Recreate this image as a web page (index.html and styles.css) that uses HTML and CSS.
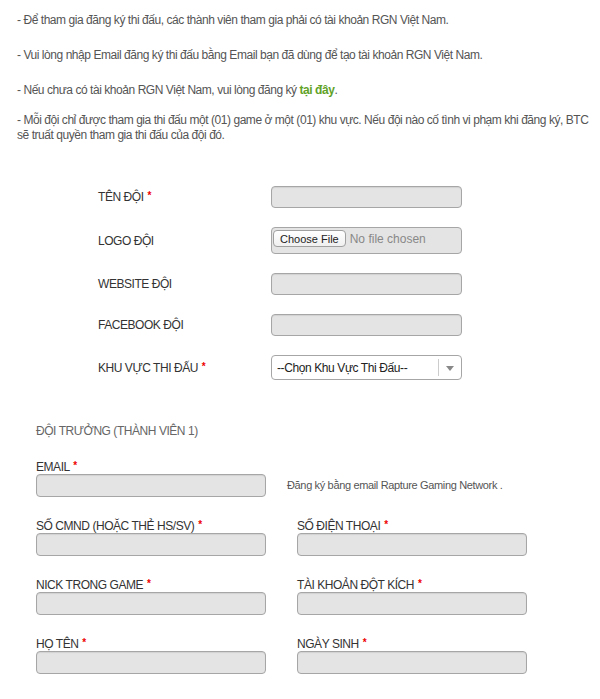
FILE: index.html
```html
<!DOCTYPE html>
<html lang="vi">
<head>
    <meta charset="UTF-8">
    <meta name="viewport" content="width=device-width, initial-scale=1.0">
    <title>Đăng ký thi đấu</title>
    <link rel="stylesheet" href="styles.css">
</head>
<body>
    <div class="register-page">

        <!-- Notes before the form -->
        <div class="notes">
            <p class="note">- Để tham gia đăng ký thi đấu, các thành viên tham gia phải có tài khoản RGN Việt Nam.</p>
            <p class="note">- Vui lòng nhập Email đăng ký thi đấu bằng Email bạn đã dùng để tạo tài khoản RGN Việt Nam.</p>
            <p class="note short">- Nếu chưa có tài khoản RGN Việt Nam, vui lòng đăng ký <a href="#" class="green-link">tại đây</a>.</p>
            <p class="note">- Mỗi đội chỉ được tham gia thi đấu một (01) game ở một (01) khu vực. Nếu đội nào cố tình vi phạm khi đăng ký, BTC sẽ truất quyền tham gia thi đấu của đội đó.</p>
        </div>

        <!-- Team info -->
        <div class="team-form">
            <label class="team-label" for="teamName">TÊN ĐỘI <span class="req">*</span></label>
            <input class="text-input" type="text" id="teamName">

            <label class="team-label" for="teamLogo">LOGO ĐỘI</label>
            <div class="file-box">
                <input type="file" id="teamLogo" class="file-input">
            </div>

            <label class="team-label" for="teamSite">WEBSITE ĐỘI</label>
            <input class="text-input" type="text" id="teamSite">

            <label class="team-label" for="teamFb">FACEBOOK ĐỘI</label>
            <input class="text-input" type="text" id="teamFb">

            <label class="team-label" for="teamRegion">KHU VỰC THI ĐẤU <span class="req">*</span></label>
            <div class="select-box">
                <select id="teamRegion" class="region-select">
                    <option>--Chọn Khu Vực Thi Đấu--</option>
                    <option>Hà Nội</option>
                    <option>TP. Hồ Chí Minh</option>
                </select>
                <span class="select-arrow"></span>
            </div>
        </div>

        <!-- Captain (member 1) -->
        <div class="member">
            <div class="member-title">ĐỘI TRƯỞNG (THÀNH VIÊN 1)</div>

            <div class="email-row">
                <div class="field">
                    <label class="field-label" for="m1Email">EMAIL <span class="req">*</span></label>
                    <input class="text-input wide" type="text" id="m1Email">
                </div>
                <div class="hint">Đăng ký bằng email Rapture Gaming Network .</div>
            </div>

            <div class="member-grid">
                <div class="field">
                    <label class="field-label" for="m1Id">SỐ CMND (HOẶC THẺ HS/SV) <span class="req">*</span></label>
                    <input class="text-input wide" type="text" id="m1Id">
                </div>
                <div class="field">
                    <label class="field-label" for="m1Phone">SỐ ĐIỆN THOẠI <span class="req">*</span></label>
                    <input class="text-input wide" type="text" id="m1Phone">
                </div>
                <div class="field">
                    <label class="field-label" for="m1Nick">NICK TRONG GAME <span class="req">*</span></label>
                    <input class="text-input wide" type="text" id="m1Nick">
                </div>
                <div class="field">
                    <label class="field-label" for="m1Account">TÀI KHOẢN ĐỘT KÍCH <span class="req">*</span></label>
                    <input class="text-input wide" type="text" id="m1Account">
                </div>
                <div class="field">
                    <label class="field-label" for="m1Name">HỌ TÊN <span class="req">*</span></label>
                    <input class="text-input wide" type="text" id="m1Name">
                </div>
                <div class="field">
                    <label class="field-label" for="m1Birth">NGÀY SINH <span class="req">*</span></label>
                    <input class="text-input wide" type="text" id="m1Birth">
                </div>
            </div>
        </div>

    </div>
</body>
</html>
```

FILE: styles.css
```css
/* Page */
body {
    margin: 0;
    font-family: 'Liberation Sans', Arial, sans-serif;
    font-size: 12px;
    letter-spacing: -0.45px;
    color: #444;
    background: #fff;
}

.register-page {
    padding: 13px 10px 30px 17px;
}

/* Notes at the top */
.notes {
    margin-bottom: 43px;
}

.note {
    margin: 0 0 20px;
    line-height: 15px;
    color: #555;
}

.note.short {
    margin-bottom: 15px;
}

.note:last-child {
    margin-bottom: 0;
}

.green-link {
    color: #5fa227;
    font-weight: bold;
    text-decoration: none;
}

/* Required mark */
.req {
    color: #e00;
    font-size: 10px;
    font-weight: bold;
    vertical-align: 2px;
    margin-left: 1px;
}

/* Shared text box */
.text-input {
    box-sizing: border-box;
    width: 191px;
    height: 22px;
    margin: 0;
    padding: 2px 6px;
    font-family: inherit;
    font-size: 12px;
    background: #e4e4e4;
    border: 1px solid #a6a6a6;
    border-radius: 4px;
    box-shadow: inset 0 1px 1px rgba(0, 0, 0, 0.08);
}

.text-input.wide {
    width: 230px;
    height: 23px;
}

/* Team info block */
.team-form {
    display: grid;
    grid-template-columns: 173px 191px;
    row-gap: 19px;
    align-items: center;
    margin-left: 81px;
}

.team-label {
    color: #333;
}

.file-box {
    box-sizing: border-box;
    height: 27px;
    padding: 2px 1px;
    background: #e4e4e4;
    border: 1px solid #a6a6a6;
    border-radius: 4px;
}

.file-input {
    font-family: 'Liberation Sans', Arial, sans-serif;
    font-size: 12px;
    letter-spacing: 0;
    color: #888;
    width: 185px;
}

.file-input::file-selector-button {
    font-family: 'Liberation Sans', Arial, sans-serif;
    font-size: 11px;
    color: #222;
    height: 17px;
    padding: 0 6px;
    margin-right: 4px;
    background: linear-gradient(#fff, #f0f0f0);
    border: 1px solid #a0a0a0;
    border-radius: 4px;
}

.select-box {
    position: relative;
    width: 191px;
    height: 25px;
}

.region-select {
    box-sizing: border-box;
    width: 100%;
    height: 25px;
    padding: 0 24px 0 5px;
    font-family: inherit;
    font-size: 12px;
    letter-spacing: -0.4px;
    color: #222;
    background: #fff;
    border: 1px solid #a6a6a6;
    border-radius: 4px;
    appearance: none;
    -webkit-appearance: none;
}

/* Dropdown arrow drawn over the select */
.select-arrow {
    position: absolute;
    top: 4px;
    right: 1px;
    width: 22px;
    height: 17px;
    border-left: 1px solid #ccc;
    pointer-events: none;
}

.select-arrow::after {
    content: "";
    position: absolute;
    top: 7px;
    left: 7px;
    border-left: 4px solid transparent;
    border-right: 4px solid transparent;
    border-top: 5px solid #888;
}

/* Captain block */
.member {
    margin: 44px 0 0 19px;
}

.member-title {
    color: #666;
    line-height: 14px;
    margin-bottom: 21px;
}

.field {
    display: flex;
    flex-direction: column;
}

.field-label {
    line-height: 14px;
    color: #333;
}

.email-row {
    display: flex;
    align-items: flex-end;
    gap: 21px;
    margin-bottom: 21px;
}

.hint {
    font-size: 11px;
    letter-spacing: -0.35px;
    color: #555;
    line-height: 23px;
}

.member-grid {
    display: grid;
    grid-template-columns: 230px 230px;
    column-gap: 31px;
    row-gap: 21px;
}
```
